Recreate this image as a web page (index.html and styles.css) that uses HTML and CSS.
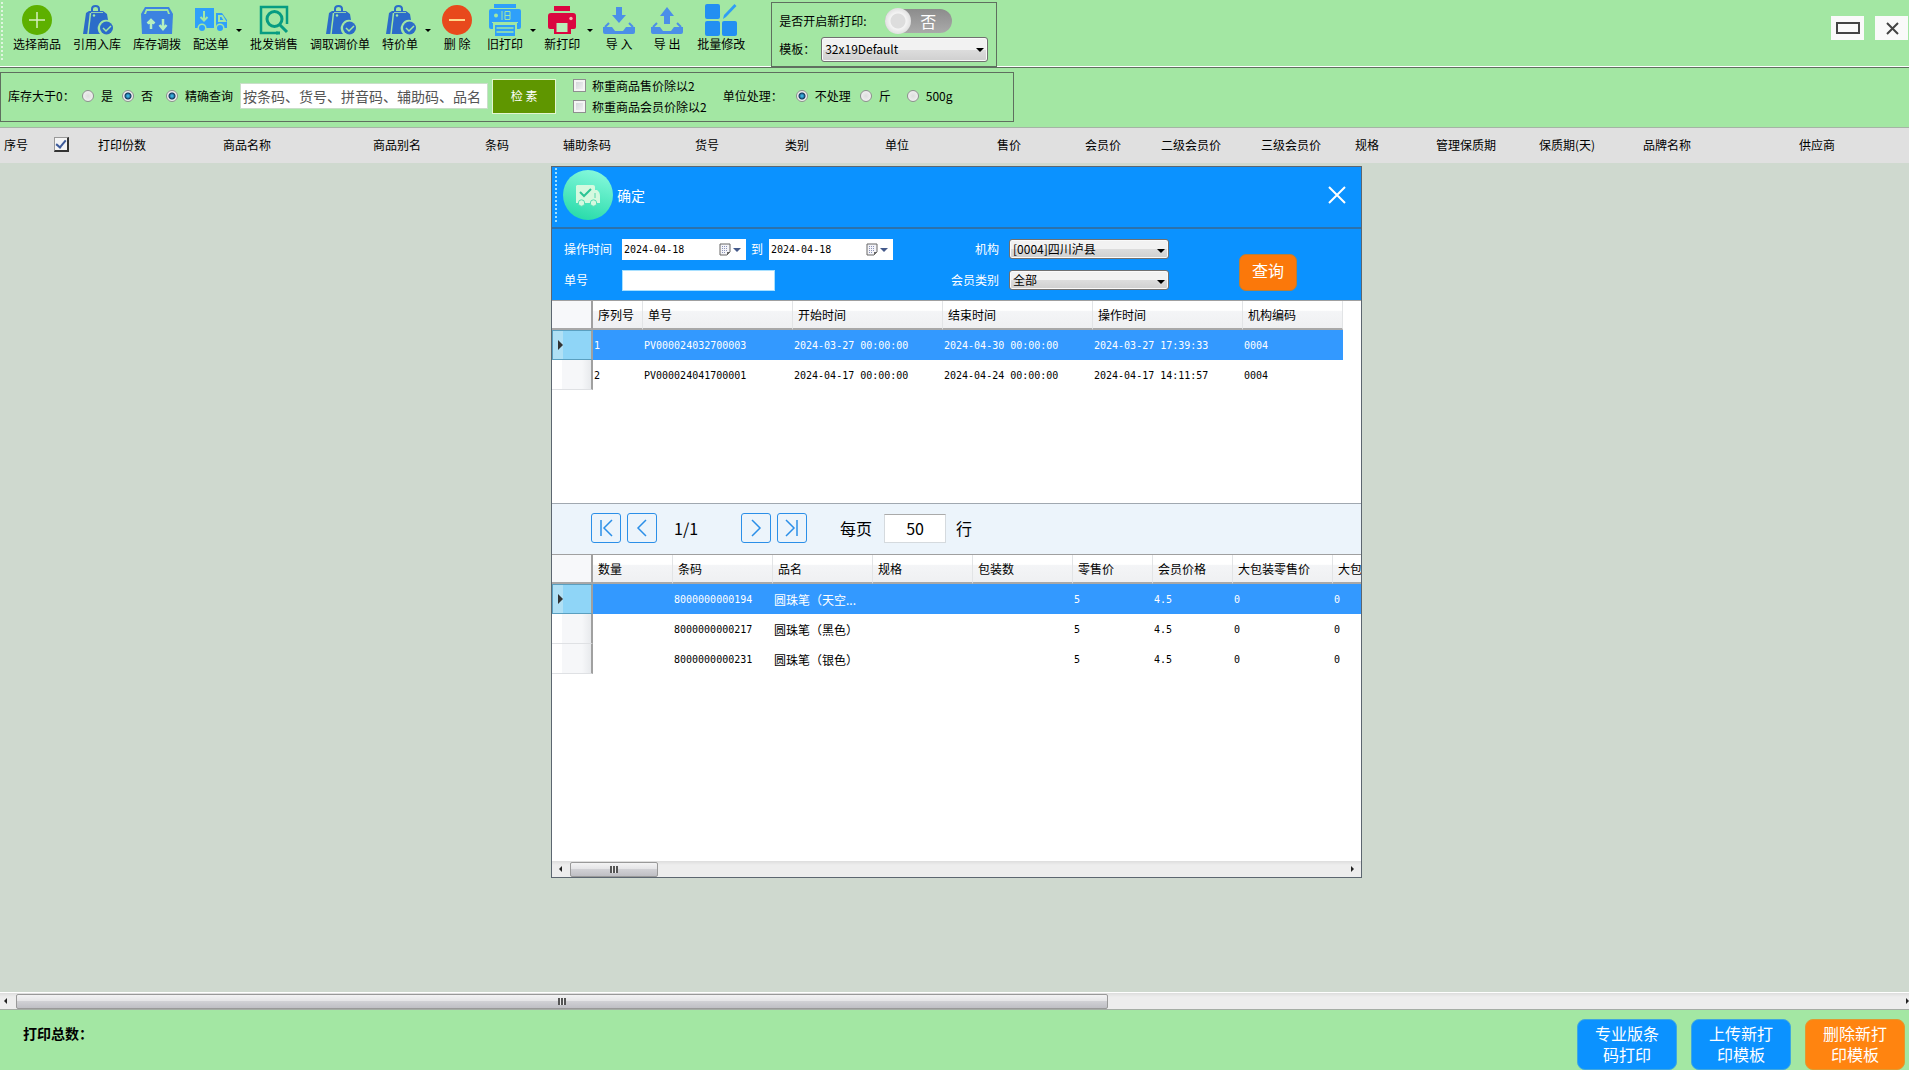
FILE: index.html
```html
<!DOCTYPE html>
<html lang="zh-CN">
<head>
	<meta charset="utf-8">
	<title>条码打印</title>
	<link rel="stylesheet" href="styles.css">
</head>
<body>
	<!-- shared icons -->
	<svg class="sprite" width="0" height="0">
		<symbol id="bag" viewBox="0 0 32 32">
			<path d="M11 8V5q0-3 3.500-3T18 5v3" fill="none" stroke="#2b6cc9" stroke-width="2"/>
			<path d="M5 9l3-2h14l4 3 1 6a8.500 8.500 0 0 0-8 14H2z" fill="#2b6cc9"/>
			<path d="M9.500 9L7 30" stroke="#a3e7a3" stroke-width="1.500"/>
			<path d="M10 8.500h12" stroke="#8fd0b0"/>
			<circle cx="13" cy="11.500" r="1.200" fill="#a3e7a3"/>
			<circle cx="25.500" cy="24" r="6.500" fill="#2b6cc9"/>
			<path d="M22 24l3 3 5-5" fill="none" stroke="#a3e7a3" stroke-width="1.500"/>
		</symbol>
		<symbol id="calendar" viewBox="0 0 12 13">
			<path d="M1 1h10v8l-3 3H1z" fill="#f4f4f8" stroke="#666"/>
			<path d="M3 3.500h6M3 5.500h6M3 7.500h6M3 9.500h4" stroke="#8a93b8" stroke-dasharray="1 1"/>
			<path d="M8 12V9h3z" fill="#666"/>
		</symbol>
	</svg>

	<header class="toolbar">
		<div class="grip"></div>
		<button class="tool"><svg viewBox="0 0 32 32"><circle cx="16" cy="16" r="15" fill="#5db000"/><path d="M16 8v16M8 16h16" stroke="#d5f0c0" stroke-width="1.500"/></svg><span>选择商品</span></button>
		<button class="tool"><svg><use href="#bag"/></svg><span>引用入库</span></button>
		<button class="tool"><svg viewBox="0 0 32 32"><path d="M4 3h24l4 7H0z" fill="#3c83e0"/><path d="M5 5h22l2 5H3z" fill="#a3e7a3"/><path d="M6 7h20l1 3H5z" fill="#3c83e0"/><path d="M0 10h32l-1 20H1z" fill="#3c83e0"/><path d="M10 25V16M6.500 19.500L10 16l3.500 3.500M22 15v9M18.500 21l3.500 4 3.500-4" fill="none" stroke="#b5efc0" stroke-width="2.500"/></svg><span>库存调拨</span></button>
		<button class="tool"><svg viewBox="0 0 32 32"><path d="M0 4h19v20H0zM21 9h6l5 7v8H21z" fill="#2fa0fa"/><path d="M9 7v9M5.500 13L9 16.500l3.500-3.500M24 12h3l3 5h-6z" fill="none" stroke="#a3e7a3" stroke-width="2"/><circle cx="7" cy="24" r="4.500" fill="#a3e7a3"/><circle cx="7" cy="24" r="3" fill="#2fa0fa"/><circle cx="25" cy="24" r="4.500" fill="#a3e7a3"/><circle cx="25" cy="24" r="3" fill="#2fa0fa"/></svg><span>配送单</span></button>
		<button class="more" aria-label="配送单选项"></button>
		<button class="tool"><svg viewBox="0 0 32 32"><path d="M29 20V3H3v26h17" fill="none" stroke="#079c82" stroke-width="2.500"/><circle cx="16.500" cy="15" r="7.500" fill="none" stroke="#079c82" stroke-width="3"/><path d="M21 20l8 8M18 29h4" stroke="#079c82" stroke-width="3"/></svg><span>批发销售</span></button>
		<button class="tool"><svg><use href="#bag"/></svg><span>调取调价单</span></button>
		<button class="tool"><svg><use href="#bag"/></svg><span>特价单</span></button>
		<button class="more" aria-label="特价单选项"></button>
		<button class="tool"><svg viewBox="0 0 32 32"><circle cx="16" cy="16" r="15" fill="#e8491c"/><path d="M8 16h16" stroke="#ffd98c" stroke-width="2"/></svg><span>删 除</span></button>
		<button class="tool"><svg viewBox="0 0 32 32"><path d="M5 0h22v4H5z" fill="#2fa0fa"/><path d="M2 5h28q2 0 2 2v16q0 2-2 2h-2v-6H4v6H2q-2 0-2-2V7q0-2 2-2z" fill="#2fa0fa"/><circle cx="7" cy="11.500" r="2" fill="#a3e7a3"/><path d="M13 7v9M16 7.500h5v8h-5zM16 11.500h5M3 18.500h26" fill="none" stroke="#a3e7a3"/><path d="M6 21h20v11H6z" fill="#2fa0fa"/><path d="M7.500 24h17M7.500 28h17" stroke="#a3e7a3" stroke-width="1.500"/></svg><span>旧打印</span></button>
		<button class="more" aria-label="旧打印选项"></button>
		<button class="tool"><svg viewBox="0 0 32 32"><path d="M8 2h16v5H8zM5 9h22q3 0 3 3v11q0 2-2 2h-3v5H8v-5H4q-2 0-2-2V12q0-3 3-3z" fill="#db0640"/><path d="M10.500 19h11v9h-11z" fill="#b9efb9"/><circle cx="25" cy="14.500" r="1.700" fill="#f8b0b0"/></svg><span>新打印</span></button>
		<button class="more" aria-label="新打印选项"></button>
		<button class="tool"><svg viewBox="0 0 32 32"><path d="M13 3h6v8h4l-7 8-7-8h4z" fill="#4b8fe8"/><path d="M6 19l-4 4M26 19l4 4" stroke="#4b8fe8" stroke-width="2"/><path d="M0 23h9l3 4h8l3-4h9v5q0 2-2 2H2q-2 0-2-2z" fill="#4b8fe8"/></svg><span>导 入</span></button>
		<button class="tool"><svg viewBox="0 0 32 32"><path d="M13 20h6v-8h4l-7-9-7 9h4z" fill="#4b8fe8"/><path d="M6 19l-4 4M26 19l4 4" stroke="#4b8fe8" stroke-width="2"/><path d="M0 23h9l3 4h8l3-4h9v5q0 2-2 2H2q-2 0-2-2z" fill="#4b8fe8"/></svg><span>导 出</span></button>
		<button class="tool"><svg viewBox="0 0 32 32"><rect width="15" height="15" rx="2" fill="#238ff2"/><rect y="17" width="15" height="15" rx="2" fill="#238ff2"/><rect x="17" y="17" width="15" height="15" rx="2" fill="#238ff2"/><path d="M18 15l1-4L29.500 0l2 2L21 13z" fill="#2f9df5"/></svg><span>批量修改</span></button>

		<div class="print-box">
			<div class="print-row">
				<span>是否开启新打印:</span>
				<button class="toggle" role="switch" aria-checked="false" aria-label="是否开启新打印"><i></i><b>否</b></button>
			</div>
			<div class="print-row">
				<label for="template">模板：</label>
				<span class="drop template"><select id="template"><option>32x19Default</option></select></span>
			</div>
		</div>

		<div class="window-buttons">
			<button aria-label="还原"><svg viewBox="0 0 33 24"><rect x="6" y="7" width="22" height="10" fill="none" stroke="#444" stroke-width="2"/></svg></button>
			<button aria-label="关闭"><svg viewBox="0 0 33 24"><path d="M12 7l11 11M23 7L12 18" stroke="#444" stroke-width="2"/></svg></button>
		</div>
	</header>

	<section class="filters">
		<div class="filter-box">
			<span class="stock-label">库存大于0：</span>
			<label class="choice"><input type="radio" name="stock">是</label>
			<label class="choice"><input type="radio" name="stock" checked>否</label>
			<label class="choice exact"><input type="radio" name="exact" checked>精确查询</label>
			<input class="search" type="text" aria-label="检索内容" placeholder="按条码、货号、拼音码、辅助码、品名">
			<button class="search-button">检 素</button>
			<div class="checks">
				<label class="check"><input type="checkbox">称重商品售价除以2</label>
				<label class="check"><input type="checkbox">称重商品会员价除以2</label>
			</div>
			<span class="unit-label">单位处理：</span>
			<label class="choice"><input type="radio" name="unit" checked>不处理</label>
			<label class="choice"><input type="radio" name="unit">斤</label>
			<label class="choice last"><input type="radio" name="unit">500g</label>
		</div>
	</section>

	<main class="workspace">
		<table class="goods">
			<colgroup>
				<col class="w50"><col class="w44"><col class="w125"><col class="w150"><col class="w112"><col class="w78"><col class="w132"><col class="w90"><col class="w100"><col class="w112"><col class="w88"><col class="w76"><col class="w100"><col class="w94"><col class="w81"><col class="w103"><col class="w104"><col class="w156"><col>
			</colgroup>
			<thead>
				<tr>
					<th>序号</th>
					<th><input class="raised" type="checkbox" aria-label="全选" checked></th>
					<th>打印份数</th>
					<th>商品名称</th>
					<th>商品别名</th>
					<th>条码</th>
					<th>辅助条码</th>
					<th>货号</th>
					<th>类别</th>
					<th>单位</th>
					<th>售价</th>
					<th>会员价</th>
					<th>二级会员价</th>
					<th>三级会员价</th>
					<th>规格</th>
					<th>管理保质期</th>
					<th>保质期(天)</th>
					<th>品牌名称</th>
					<th>供应商</th>
				</tr>
			</thead>
		</table>

		<section class="modal" role="dialog" aria-label="确定">
			<div class="modal-title">
				<div class="grip light"></div>
				<svg class="truck" viewBox="0 0 50 50">
					<defs><linearGradient id="mint" x1=".7" y1="0" x2=".4" y2="1"><stop offset="0" stop-color="#86f9dc"/><stop offset="1" stop-color="#29dbaa"/></linearGradient></defs>
					<circle cx="25" cy="25" r="25" fill="url(#mint)"/>
					<path d="M14 15h16q2 0 2 2v3h2q3 2 3 6v7H13V16z" fill="#d5f9df"/>
					<path d="M17 22l4 4 7-7" fill="none" stroke="#2cc495" stroke-width="2"/>
					<path d="M32 23v5" stroke="#56d8ae"/>
					<circle cx="18.500" cy="33" r="3.200" fill="#d5f9df" stroke="#56deb4"/>
					<circle cx="30.500" cy="33" r="3.200" fill="#d5f9df" stroke="#56deb4"/>
				</svg>
				<h1>确定</h1>
				<button class="close" aria-label="关闭窗口"><svg viewBox="0 0 18 18"><path d="M1 1l16 16M17 1L1 17" stroke="#fff" stroke-width="2"/></svg></button>
			</div>

			<form class="query">
				<div class="query-left">
					<label for="from">操作时间</label>
					<div class="dates">
						<span class="date"><input id="from" type="text" value="2024-04-18"><svg class="cal"><use href="#calendar"/></svg></span>
						<label for="to">到</label>
						<span class="date"><input id="to" type="text" value="2024-04-18"><svg class="cal"><use href="#calendar"/></svg></span>
					</div>
					<label for="number">单号</label>
					<input id="number" class="number" type="text">
				</div>
				<div class="query-mid">
					<label for="org">机构</label>
					<span class="drop"><select id="org"><option>[0004]四川泸县</option></select></span>
					<label for="kind">会员类别</label>
					<span class="drop"><select id="kind"><option>全部</option></select></span>
				</div>
				<button type="button" class="query-button">查询</button>
			</form>

			<div class="grid-area orders">
				<table class="grid">
					<colgroup><col class="w41"><col class="w50"><col class="w150"><col class="w150"><col class="w150"><col class="w150"><col class="w100"></colgroup>
					<thead>
						<tr><th></th><th>序列号</th><th>单号</th><th>开始时间</th><th>结束时间</th><th>操作时间</th><th>机构编码</th></tr>
					</thead>
					<tbody>
						<tr class="selected"><th></th><td>1</td><td>PV000024032700003</td><td>2024-03-27 00:00:00</td><td>2024-04-30 00:00:00</td><td>2024-03-27 17:39:33</td><td>0004</td></tr>
						<tr><th></th><td>2</td><td>PV000024041700001</td><td>2024-04-17 00:00:00</td><td>2024-04-24 00:00:00</td><td>2024-04-17 14:11:57</td><td>0004</td></tr>
					</tbody>
				</table>
			</div>

			<div class="pager">
				<button aria-label="首页"><svg viewBox="0 0 28 28"><path d="M9 6v16M20 6l-8 8 8 8"/></svg></button>
				<button aria-label="上一页"><svg viewBox="0 0 28 28"><path d="M18 6l-8 8 8 8"/></svg></button>
				<span class="page">1/1</span>
				<button aria-label="下一页"><svg viewBox="0 0 28 28"><path d="M10 6l8 8-8 8"/></svg></button>
				<button aria-label="末页"><svg viewBox="0 0 28 28"><path d="M8 6l8 8-8 8M19 6v16"/></svg></button>
				<label class="per-page" for="rows">每页</label>
				<input id="rows" type="text" value="50">
				<span>行</span>
			</div>

			<div class="grid-area items">
				<table class="grid">
					<colgroup><col class="w41"><col class="w80"><col class="w100"><col class="w100"><col class="w100"><col class="w100"><col class="w80"><col class="w80"><col class="w100"><col class="w100"></colgroup>
					<thead>
						<tr><th></th><th>数量</th><th>条码</th><th>品名</th><th>规格</th><th>包装数</th><th>零售价</th><th>会员价格</th><th>大包装零售价</th><th>大包</th></tr>
					</thead>
					<tbody>
						<tr class="selected"><th></th><td></td><td>8000000000194</td><td class="cn">圆珠笔（天空...</td><td></td><td></td><td>5</td><td>4.5</td><td>0</td><td>0</td></tr>
						<tr><th></th><td></td><td>8000000000217</td><td class="cn">圆珠笔（黑色）</td><td></td><td></td><td>5</td><td>4.5</td><td>0</td><td>0</td></tr>
						<tr><th></th><td></td><td>8000000000231</td><td class="cn">圆珠笔（银色）</td><td></td><td></td><td>5</td><td>4.5</td><td>0</td><td>0</td></tr>
					</tbody>
				</table>
			</div>
			<div class="scrollbar"><i class="arrow left"></i><div class="track"><div class="thumb short"></div></div><i class="arrow right"></i></div>
		</section>
	</main>

	<div class="scrollbar main-scroll"><i class="arrow left"></i><div class="track"><div class="thumb"></div></div><i class="arrow right"></i></div>

	<footer class="footer">
		<strong>打印总数：</strong>
		<div class="footer-buttons">
			<button>专业版条<br>码打印</button>
			<button>上传新打<br>印模板</button>
			<button class="orange">删除新打<br>印模板</button>
		</div>
	</footer>
</body>
</html>
```
FILE: styles.css
```css
*{
	box-sizing: border-box;
}
body{
	margin: 0;
	height: 100vh;
	display: flex;
	flex-direction: column;
	overflow: hidden;
	background: #a3e7a3;
	color: #000;
	font: 12px/18px "Noto Sans CJK SC", sans-serif;
}
button, input, select{
	font: inherit;
	color: inherit;
	margin: 0;
}
button{
	border: 0;
	padding: 0;
	background: none;
	cursor: pointer;
}
svg{
	display: block;
}
.sprite{
	position: absolute;
}

/* toolbar */
.toolbar{
	display: flex;
	align-items: flex-start;
	height: 68px;
	border-bottom: 1px solid #5f6f5f;
	box-shadow: inset 0 -1px #fff;
}
.grip{
	width: 4px;
	height: 60px;
	margin: 2px 2px 0 1px;
	background: repeating-linear-gradient(#dff5df 0 2px, transparent 2px 4px);
	border-right: 2px solid #a3e7a3;
}
.tool{
	min-width: 48px;
	padding: 4px 6px 0;
	display: flex;
	flex-direction: column;
	align-items: center;
	line-height: 16px;
	white-space: nowrap;
}
.tool svg{
	width: 32px;
	height: 32px;
}
.more{
	width: 8px;
	margin-right: 1px;
	height: 60px;
	display: flex;
	align-items: center;
	justify-content: center;
}
.more::before, .drop::after{
	content: "";
	border: 3px solid transparent;
	border-top-color: #000;
	border-bottom: 0;
}
.print-box{
	margin: 2px 0 0 20px;
	padding: 4px 8px 0 7px;
	height: 65px;
	border: 1px solid #5f6f5f;
}
.print-row{
	display: flex;
	align-items: center;
	justify-content: space-between;
	height: 28px;
	gap: 6px;
}
.toggle{
	width: 67px;
	height: 24px;
	margin-right: 36px;
	display: flex;
	align-items: center;
	border-radius: 12px;
	background: linear-gradient(#8c8c8c, #aaa);
	color: #fff;
	font-size: 16px;
}
.toggle i{
	width: 26px;
	height: 26px;
	margin-right: 9px;
	flex: none;
	border-radius: 50%;
	background: radial-gradient(#ddd 0 7px, #f4f4f4 8px, #ccc);
}
.toggle b{
	font-weight: normal;
}
.drop{
	position: relative;
	display: block;
	width: 160px;
}
.drop::after{
	position: absolute;
	right: 4px;
	top: 50%;
	margin-top: -1px;
	border-width: 4px 4px 0;
}
.drop select{
	appearance: none;
	display: block;
	width: 100%;
	height: 20px;
	padding: 0 3px;
	line-height: 18px;
	border: 1px solid #707070;
	border-radius: 3px;
	background: linear-gradient(#f2f2f2 0 50%, #ddd 50%, #cfcfcf);
	box-shadow: inset 0 0 0 1px #fafafa;
	color: #000;
}
.template{
	width: 167px;
}
.template select{
	height: 25px;
}
.window-buttons{
	display: flex;
	gap: 11px;
	margin: 16px 1px 0 auto;
}
.window-buttons button{
	width: 33px;
	height: 24px;
	background: #fafafa;
}

/* filters */
.filters{
	display: flex;
	padding: 4px 0 5px;
}
.filter-box{
	display: flex;
	align-items: center;
	height: 50px;
	padding: 0 60px 2px 7px;
	border: 1px solid #5f6f5f;
	white-space: nowrap;
}
.stock-label{
	width: 74px;
}
.choice, .check{
	display: flex;
	align-items: center;
	gap: 7px;
	margin-right: 9px;
}
.choice.exact{
	margin: 0 7px 0 4px;
}
.choice.last{
	margin: 0 0 0 7px;
}
input[type="radio"]{
	appearance: none;
	width: 12px;
	height: 12px;
	border: 1px solid #8e8f8f;
	border-radius: 50%;
	background: radial-gradient(#ddd, #f6f6f6);
}
input[type="radio"]:checked{
	background: radial-gradient(#3ab0e0 0 1px, #12395c 3px, #f0f0f0 4px);
}
.search{
	width: 248px;
	height: 26px;
	padding: 0 2px;
	border: 1px solid #c9dfc9;
	background: #fff;
	font-size: 14px;
}
.search::placeholder{
	color: #555;
}
.search-button{
	width: 64px;
	height: 35px;
	margin-left: 4px;
	border: 1px solid #e3f5d0;
	background: #5f9600;
	color: #fff;
}
.checks{
	margin-left: 17px;
}
.check{
	height: 21px;
	gap: 6px;
	margin-right: 16px;
}
input[type="checkbox"]{
	appearance: none;
	width: 13px;
	height: 13px;
	border: 1px solid #8e8f8f;
	background: linear-gradient(135deg, #ccd0d5, #f6f6f6);
	box-shadow: inset 0 0 0 2px #f4f4f4;
}
.unit-label{
	width: 73px;
}

/* main list */
.workspace{
	position: relative;
	flex: 1;
	background: #cfd9cf;
}
.goods, .grid{
	border-collapse: separate;
	border-spacing: 0;
	table-layout: fixed;
}
.goods{
	width: 100%;
	background: #e0e0e0;
	border-top: 1px solid #a5b5a5;
}
.goods th{
	height: 35px;
	padding: 0 0 2px 4px;
	font-weight: normal;
	text-align: left;
	white-space: nowrap;
}
.goods .raised{
	display: grid;
	place-items: center;
	width: 15px;
	height: 15px;
	border: 1px solid #999;
	border-width: 1px 2px 2px 1px;
	border-right-color: #333;
	border-bottom-color: #333;
	background: #f0f2f6;
}
.raised:checked::before{
	content: "";
	width: 4px;
	height: 8px;
	margin-bottom: 2px;
	border: solid #3c5a9a;
	border-width: 0 2px 2px 0;
	transform: rotate(40deg);
}
.w41{ width: 41px; }
.w44{ width: 44px; }
.w50{ width: 50px; }
.w76{ width: 76px; }
.w78{ width: 78px; }
.w80{ width: 80px; }
.w81{ width: 81px; }
.w88{ width: 88px; }
.w90{ width: 90px; }
.w94{ width: 94px; }
.w100{ width: 100px; }
.w103{ width: 103px; }
.w104{ width: 104px; }
.w112{ width: 112px; }
.w125{ width: 125px; }
.w132{ width: 132px; }
.w150{ width: 150px; }
.w156{ width: 156px; }

/* floating window */
.modal{
	position: absolute;
	left: 551px;
	top: 39px;
	width: 811px;
	height: 712px;
	display: flex;
	flex-direction: column;
	overflow: hidden;
	border: 1px solid #5c6670;
	background: #fff;
}
.modal-title{
	flex: none;
	display: flex;
	align-items: center;
	height: 62px;
	padding: 0 15px 4px 3px;
	border-bottom: 2px solid #2c72ac;
	background: #0b92ff;
	color: #fff;
}
.grip.light{
	height: 54px;
	margin: 0 4px 0 0;
	background: repeating-linear-gradient(#9fe0ff 0 2px, transparent 2px 4px);
	border-right-color: #0b92ff;
}
.truck{
	width: 50px;
	height: 50px;
}
.modal-title h1{
	margin: 0 auto 0 4px;
	font-size: 14px;
	font-weight: normal;
}
.close svg{
	width: 18px;
	height: 18px;
}
.query{
	flex: none;
	display: flex;
	align-items: flex-start;
	height: 71px;
	padding-left: 12px;
	background: #0b92ff;
	color: #fff;
}
.query-left, .query-mid{
	display: grid;
	grid-template-columns: 58px auto;
	grid-auto-rows: 21px;
	gap: 10px 0;
	padding-top: 10px;
	line-height: 20px;
}
.query-mid{
	grid-template-columns: 48px auto;
	gap: 10px;
	margin-left: 58px;
	text-align: right;
}
.dates{
	display: flex;
	gap: 5px;
}
.date{
	display: flex;
	align-items: center;
	width: 124px;
	background: #fff;
}
.date::after{
	content: "";
	margin-left: 2px;
	border: 4px solid transparent;
	border-top-color: #44598a;
	border-bottom: 0;
}
.date input{
	width: 97px;
	height: 19px;
	padding: 0 2px;
	border: 0;
	color: #000;
	font: 10px "DejaVu Sans Mono", monospace;
}
.cal{
	width: 12px;
	height: 13px;
}
.dates label{
	width: 13px;
}
.number{
	width: 153px;
	height: 21px;
	border: 1px solid #a8e0ff;
	background: #fff;
	color: #000;
}
.query-button{
	width: 58px;
	height: 37px;
	margin: 25px 0 0 70px;
	padding-bottom: 6px;
	border: 1px solid #b5803c;
	border-radius: 7px;
	background: #fb780a;
	color: #fff;
	font-size: 16px;
}

/* grids inside the window */
.grid-area{
	flex: none;
	height: 203px;
	border-top: 1px solid #a0a0a0;
	overflow: hidden;
}
.items{
	flex: 1;
}
.grid{
	width: 0;
}
.grid th, .grid td{
	height: 30px;
	padding: 0 0 0 1px;
	font-weight: normal;
	text-align: left;
	white-space: nowrap;
}
.grid thead th{
	height: 29px;
	padding-left: 5px;
	border-right: 1px solid #e2e4e6;
	border-bottom: 2px solid #a8a8a8;
	background: linear-gradient(#fff 0 35%, #f4f5f7 36%, #eff0f2);
}
.grid tr th:first-child{
	border-right: 2px solid #a0a0a0;
}
.grid thead th:first-child{
	background: #f7f8fa;
}
.grid tbody th{
	border-bottom: 1px solid #dfe1e4;
	background: linear-gradient(90deg, #fff 0 10px, #f6f7f9 10px 30px, #e8eaed);
}
.grid td{
	font: 10px "DejaVu Sans Mono", monospace;
}
.grid .cn{
	font: 12px "Noto Sans CJK SC", sans-serif;
}
.selected td{
	background: #3399ff;
	color: #fff;
}
.grid .selected th{
	border: 1px solid #5a9fc0;
	background: linear-gradient(90deg, #b0e0f5 0 10px, #8fd5f7 10px);
}
.selected th::before{
	content: "";
	display: block;
	width: 5px;
	margin-left: 4px;
	border: 5px solid transparent;
	border-left-color: #333;
	border-right: 0;
}
.pager{
	flex: none;
	display: flex;
	align-items: center;
	height: 51px;
	padding: 0 0 2px 39px;
	border-top: 1px solid #a0a8b0;
	background: #ecf4fb;
	font-size: 16px;
}
.pager button{
	width: 30px;
	height: 30px;
	margin-right: 6px;
	border: 1px solid #2b8fe8;
	border-radius: 3px;
}
.pager path{
	fill: none;
	stroke: #2b8fe8;
	stroke-width: 1.5;
}
.page{
	width: 67px;
	margin-left: 11px;
}
.per-page{
	margin: 0 12px 0 27px;
}
.pager input{
	width: 62px;
	height: 29px;
	margin-right: 10px;
	border: 1px solid #d5dade;
	border-top-color: #aaa;
	background: #fff;
	text-align: center;
}

/* scrollbars */
.scrollbar{
	flex: none;
	display: flex;
	align-items: center;
	height: 16px;
	background: linear-gradient(#ddd, #ededed 4px);
}
.main-scroll{
	height: 18px;
	border-top: 1px solid #fff;
	border-bottom: 1px solid #a5ada5;
}
.arrow{
	width: 3px;
	margin: 0 7px;
	border: 3px solid transparent;
}
.arrow.left{
	border-right-color: #222;
	border-left: 0;
	margin-right: 8px;
}
.arrow.right{
	border-left-color: #222;
	border-right: 0;
}
.main-scroll .arrow.left{
	margin-left: 4px;
	margin-right: 9px;
}
.main-scroll .arrow.right{
	margin-right: 0;
}
.track{
	flex: 1;
}
.thumb{
	display: flex;
	justify-content: center;
	align-items: center;
	width: 58%;
	height: 15px;
	border: 1px solid #999;
	border-radius: 2px;
	background: linear-gradient(#f3f3f4, #e4e4e6 48%, #d0d0d4 50%, #bfbfc4);
}
.thumb.short{
	width: 88px;
}
.thumb::before{
	content: "";
	width: 8px;
	height: 7px;
	background: repeating-linear-gradient(90deg, #555 0 2px, #eee 2px 3px);
}

/* footer */
.footer{
	display: flex;
	justify-content: space-between;
	height: 60px;
	padding: 9px 4px 0 23px;
}
.footer strong{
	font-size: 14px;
	line-height: 28px;
}
.footer-buttons{
	display: flex;
	gap: 14px;
}
.footer button{
	width: 100px;
	height: 51px;
	padding-bottom: 2px;
	border: 1px solid #3fa8e0;
	border-radius: 8px;
	background: #0b92ff;
	color: #fff;
	font-size: 16px;
	line-height: 21px;
}
.footer .orange{
	border-color: #e09a30;
	background: #ff8410;
}
```
